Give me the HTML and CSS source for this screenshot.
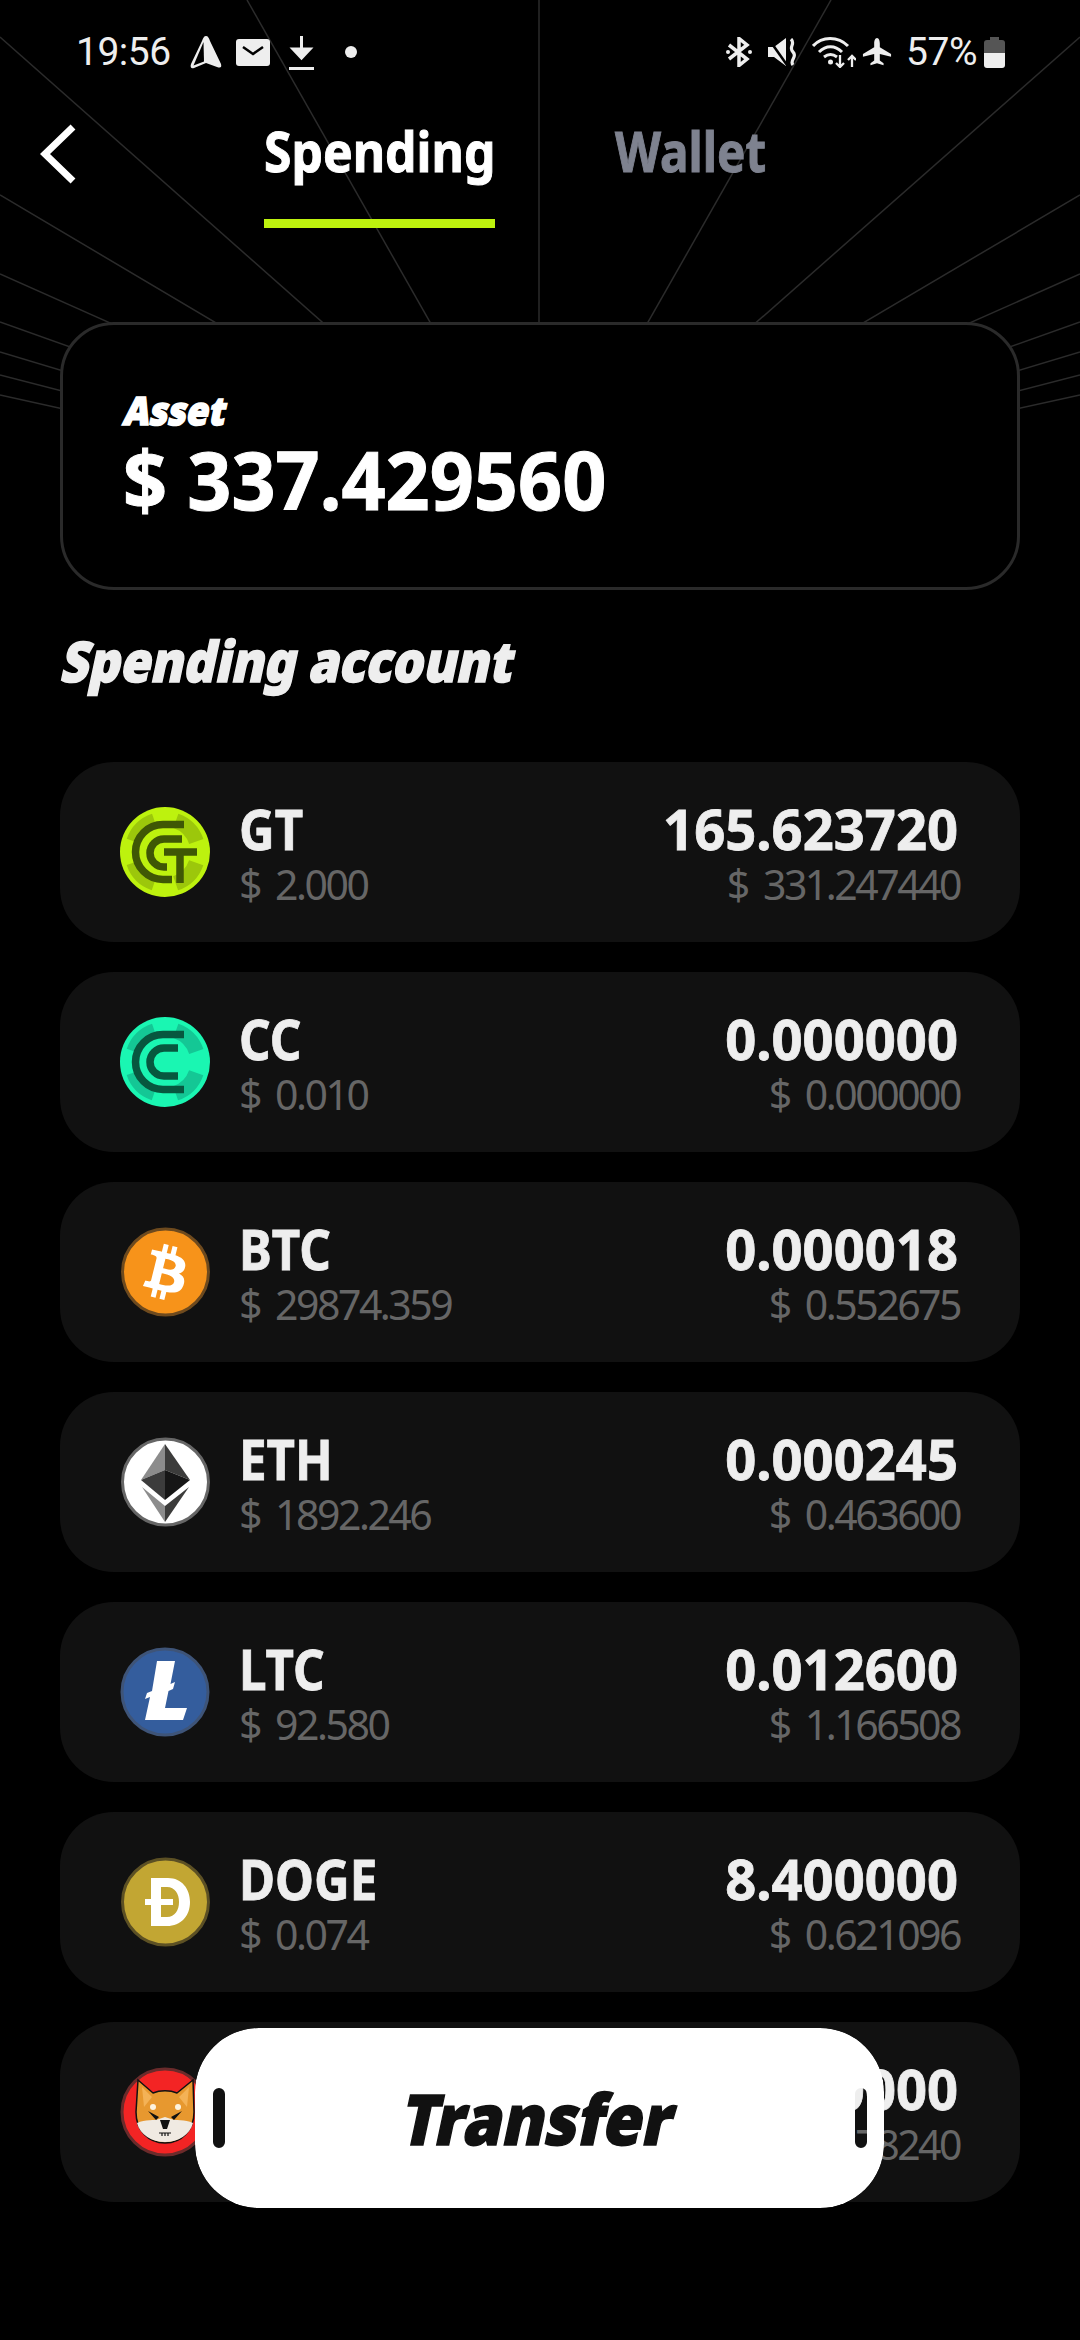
FILE: index.html
```html
<!DOCTYPE html>
<html lang="en">
<head>
  <meta charset="UTF-8" />
  <title>Spending</title>
  <link rel="stylesheet" href="styles.css">
</head>
<body>
  <div class="screen">
    <svg class="rays" width="1080" height="420" viewBox="0 0 1080 420">
      <g stroke="#2b2b2b" stroke-width="1.5">
        <line x1="539" y1="514" x2="539" y2="0" />
        <line x1="539" y1="514" x2="247" y2="0" />
        <line x1="539" y1="514" x2="831" y2="0" />
        <line x1="539" y1="514" x2="0" y2="37" />
        <line x1="539" y1="514" x2="1080" y2="37" />
        <line x1="539" y1="514" x2="0" y2="195" />
        <line x1="539" y1="514" x2="1080" y2="195" />
        <line x1="539" y1="514" x2="0" y2="274" />
        <line x1="539" y1="514" x2="1080" y2="274" />
        <line x1="539" y1="514" x2="0" y2="322" />
        <line x1="539" y1="514" x2="1080" y2="322" />
        <line x1="539" y1="514" x2="0" y2="352" />
        <line x1="539" y1="514" x2="1080" y2="352" />
        <line x1="539" y1="514" x2="0" y2="375" />
        <line x1="539" y1="514" x2="1080" y2="375" />
        <line x1="539" y1="514" x2="0" y2="395" />
        <line x1="539" y1="514" x2="1080" y2="395" />
      </g>
    </svg>

    <div class="statusbar">
      <div class="status-left">
        <span class="clock">19:56</span>
        <svg class="ic-nav" width="32" height="34" viewBox="0 0 32 34"><path d="M16 1C18 1 19 3 20 6L31 29C32 33 30 33 27 32L16 28 4 33C1 34 0 32 1 29L12 6C13 3 14 1 16 1Z" fill="#eee" /><path d="M13.500 7 3.500 30.500 14 26.500Z" fill="#000" /></svg>
        <svg class="ic-mail" width="34" height="27" viewBox="0 0 34 27"><rect width="34" height="27" rx="3" fill="#eee" /><path d="M7 8 17 15 27 8" fill="none" stroke="#000" stroke-width="2.500" /></svg>
        <svg class="ic-dl" width="25" height="35" viewBox="0 0 25 35"><path d="M12.500 1V20M4 14 12.500 23 21 14Z" fill="#eee" stroke="#eee" stroke-width="3" /><rect y="32" width="25" height="3" fill="#eee" /></svg>
        <span class="dot"></span>
      </div>
      <div class="status-right">
        <svg class="ic-bt" width="26" height="30" viewBox="0 0 26 30"><path d="M3 8 21 22 13 28.500V1.500L21 8 3 22" fill="none" stroke="#eee" stroke-width="3.500" /><circle cx="2" cy="15" r="2" fill="#eee" /><circle cx="24" cy="15" r="2" fill="#eee" /></svg>
        <svg class="ic-mute" width="29" height="28" viewBox="0 0 29 28"><path d="M0 9H6L18 0V28L6 19H0Z" fill="#eee" /><path d="M0 0 19 27" stroke="#000" stroke-width="2.500" /><path d="M23 1C28 6 20 9 25 14 30 19 21 22 25 27" fill="none" stroke="#eee" stroke-width="3.200" /></svg>
        <svg class="ic-wifi" width="44" height="32" viewBox="0 0 44 32"><g fill="none" stroke="#eee" stroke-width="3"><path d="M1 10C10 0 26 0 36 10" /><path d="M7 16C14 9 23 9 30 16" /><path d="M12 21C16 18 21 18 25 21" /></g><circle cx="18.500" cy="26" r="2.500" fill="#eee" /><path d="M28 19V31M24 27 28 31 32 27M40 31V20M36 24 40 20 44 24" fill="none" stroke="#eee" stroke-width="2.300" /></svg>
        <svg class="ic-plane" width="30" height="30" viewBox="0 0 32 30"><path d="M16 0C18 0 19 3 19 6V10L31 17V20L19 17V24L23 27V29L16 27 9 29V27L13 24V17L1 20V17L13 10V6C13 3 14 0 16 0Z" fill="#eee" /></svg>
        <span class="batt-text">57%</span>
        <span class="batt"><span class="batt-cap"></span><span class="batt-fill"></span></span>
      </div>
    </div>

    <header class="topnav">
      <svg class="back" width="36" height="60" viewBox="0 0 36 60"><path d="M33 3 5 30 33 57" fill="none" stroke="#fff" stroke-width="7" /></svg>
      <div class="tab tab-on"><span class="tab-label">Spending</span></div>
      <div class="tab"><span class="tab-label tab-label-off">Wallet</span></div>
    </header>

    <section class="asset-card">
      <div class="asset-label">Asset</div>
      <div class="asset-value">$ 337.429560</div>
    </section>

    <h2 class="section-title">Spending account</h2>

    <div class="coin-list">
      <div class="coin-row">
        <svg class="coin" viewBox="0 0 90 90">
          <circle cx="45" cy="45" r="45" fill="#bdf20e" />
          <circle cx="45" cy="45" r="33" fill="none" stroke="#9cc70b" stroke-width="15" stroke-dasharray="30 21.800" transform="rotate(19 45 45)" />
          <g fill="none" stroke="#3f5705" stroke-width="7.500">
            <path d="M64 17.500H43A27.500 27.500 0 0 0 43 72.500H52" />
            <path d="M62 32H44A14 14 0 0 0 44 60H47" />
            <path d="M44 45H77M60 45V76" />
          </g>
        </svg>
        <div class="coin-info"><div class="coin-name">GT</div><div class="coin-sub">$ 2.000</div></div>
        <div class="coin-vals"><div class="coin-amt">165.623720</div><div class="coin-sub">$ 331.247440</div></div>
      </div>
      <div class="coin-row">
        <svg class="coin" viewBox="0 0 90 90">
          <circle cx="45" cy="45" r="45" fill="#1af6b2" />
          <circle cx="45" cy="45" r="33" fill="none" stroke="#14c795" stroke-width="15" stroke-dasharray="30 21.800" transform="rotate(19 45 45)" />
          <g fill="none" stroke="#07573f" stroke-width="7.500">
            <path d="M64 17.500H43A27.500 27.500 0 0 0 43 72.500H64" />
            <path d="M58 31H44A14 14 0 0 0 44 59H58" />
          </g>
        </svg>
        <div class="coin-info"><div class="coin-name">CC</div><div class="coin-sub">$ 0.010</div></div>
        <div class="coin-vals"><div class="coin-amt">0.000000</div><div class="coin-sub">$ 0.000000</div></div>
      </div>
      <div class="coin-row">
        <svg class="coin" viewBox="0 0 90 90">
          <circle cx="45.500" cy="45" r="43" fill="#f7931a" stroke="#6e4a1e" stroke-width="3" />
          <g transform="scale(2.812)">
            <path fill="#fff" d="M23.189 14.020c.314-2.096-1.283-3.223-3.465-3.975l.708-2.840-1.728-.430-.690 2.765c-.454-.114-.920-.220-1.385-.326l.695-2.783L15.596 6l-.708 2.839c-.376-.086-.746-.170-1.104-.260l.002-.009-2.384-.595-.460 1.846s1.283.294 1.256.312c.700.175.826.638.805 1.006l-.806 3.235c.048.012.110.030.180.057l-.183-.045-1.130 4.532c-.086.212-.303.531-.793.410.018.025-1.256-.313-1.256-.313l-.858 1.978 2.250.561c.418.105.828.215 1.231.318l-.715 2.872 1.727.430.708-2.840c.472.127.930.245 1.378.357l-.706 2.828 1.728.430.715-2.866c2.948.558 5.164.333 6.097-2.333.752-2.146-.037-3.385-1.588-4.192 1.130-.260 1.980-1.003 2.207-2.538zm-3.950 5.538c-.533 2.147-4.148.986-5.320.695l.950-3.805c1.172.293 4.929.872 4.370 3.110zm.535-5.569c-.487 1.953-3.495.960-4.470.717l.860-3.450c.975.243 4.118.696 3.610 2.733z" />
          </g>
        </svg>
        <div class="coin-info"><div class="coin-name">BTC</div><div class="coin-sub">$ 29874.359</div></div>
        <div class="coin-vals"><div class="coin-amt">0.000018</div><div class="coin-sub">$ 0.552675</div></div>
      </div>
      <div class="coin-row">
        <svg class="coin" viewBox="0 0 90 90">
          <circle cx="45.500" cy="45" r="43" fill="#fff" stroke="#666" stroke-width="3" />
          <polygon points="45,7 21,43 45,33" fill="#8c8c8c" />
          <polygon points="45,7 70,43 45,33" fill="#3c3c3b" />
          <polygon points="21,43 45,33 45,63" fill="#3c3c3c" />
          <polygon points="70,43 45,33 45,63" fill="#161616" />
          <polygon points="22,50 45,69 45,85" fill="#8c8c8c" />
          <polygon points="69,50 45,69 45,85" fill="#3c3c3b" />
        </svg>
        <div class="coin-info"><div class="coin-name">ETH</div><div class="coin-sub">$ 1892.246</div></div>
        <div class="coin-vals"><div class="coin-amt">0.000245</div><div class="coin-sub">$ 0.463600</div></div>
      </div>
      <div class="coin-row">
        <svg class="coin" viewBox="0 0 90 90">
          <circle cx="45" cy="45" r="43" fill="#345d9d" stroke="#3e5478" stroke-width="3" />
          <path d="M37 14H55L50.500 37 55 35 53 42 48.500 44 45 61H67L63 73H25L30 50 25 52 27 46 32 44Z" fill="#fff" />
        </svg>
        <div class="coin-info"><div class="coin-name">LTC</div><div class="coin-sub">$ 92.580</div></div>
        <div class="coin-vals"><div class="coin-amt">0.012600</div><div class="coin-sub">$ 1.166508</div></div>
      </div>
      <div class="coin-row">
        <svg class="coin" viewBox="0 0 90 90">
          <circle cx="45.500" cy="45" r="43" fill="#c2a633" stroke="#5c5024" stroke-width="3" />
          <path fill-rule="evenodd" d="M31 21H48C62 21 70 32 70 45 70 59 61 69 47 69H31ZM41 30V60H47C55 60 59 53 59 45 59 37 55 30 47 30Z" fill="#fff" />
          <rect x="25" y="42" width="28" height="6" fill="#fff" />
        </svg>
        <div class="coin-info"><div class="coin-name">DOGE</div><div class="coin-sub">$ 0.074</div></div>
        <div class="coin-vals"><div class="coin-amt">8.400000</div><div class="coin-sub">$ 0.621096</div></div>
      </div>
      <div class="coin-row">
        <svg class="coin" viewBox="0 0 90 90">
          <circle cx="45" cy="45" r="43" fill="#f32424" stroke="#6b2b2b" stroke-width="3" />
          <path d="M18 13 33 26C40 23 50 23 57 26L73 13 74 45C74 63 62 76 45 76 28 76 16 63 16 45Z" fill="#e7982f" stroke="#111" stroke-width="1.500" />
          <path d="M22 20 32 30 24 40ZM69 20 59 30 67 40Z" fill="#f4b256" />
          <path d="M17 56C25 52 35 54 39 52L45 50 51 52C55 54 65 52 73 56 70 68 58 75 45 75 32 75 20 68 17 56Z" fill="#f0eae2" />
          <path d="M28 44 39 50 36 53ZM62 44 51 50 54 53Z" fill="#111" />
          <circle cx="33" cy="40" r="3" fill="#fdf3df" />
          <circle cx="58" cy="40" r="3" fill="#fdf3df" />
          <path d="M40 53H50L47 62H43Z" fill="#111" />
          <path d="M39 66H51M42 66V69M45 66V69M48 66V69" stroke="#111" stroke-width="1.200" fill="none" />
        </svg>
        <div class="coin-info"><div class="coin-name">SHIB</div><div class="coin-sub">$ 0.000</div></div>
        <div class="coin-vals"><div class="coin-amt">375360.000000</div><div class="coin-sub">$ 3.378240</div></div>
      </div>
    </div>

    <button class="transfer-btn">
      <span class="transfer-text">Transfer</span>
    </button>
  </div>
</body>
</html>
```

FILE: styles.css
```css
body {
  margin: 0;
  background: #000;
  font-family: "Noto Sans", "Open Sans", sans-serif;
  color: #fff;
}

.screen {
  position: relative;
  width: 1080px;
  height: 2340px;
  overflow: hidden;
  background: #000;
}

.rays {
  position: absolute;
  left: 0;
  top: 0;
}

.statusbar {
  position: relative;
  display: flex;
  justify-content: space-between;
  align-items: center;
  height: 34px;
  padding: 35px 75px 0 76px;
}

.status-left, .status-right {
  display: flex;
  align-items: center;
}

.clock, .batt-text {
  font-family: Roboto, sans-serif;
  font-size: 39px;
  font-weight: 400;
  letter-spacing: -0.5px;
  color: #eee;
  line-height: 34px;
}

.ic-nav { margin-left: 19px; }
.ic-mail { margin-left: 14px; }
.ic-dl { margin-left: 19px; }

.dot {
  width: 12px;
  height: 12px;
  margin-left: 31px;
  border-radius: 50%;
  background: #eee;
}

.ic-mute { margin-left: 16px; }
.ic-wifi { margin-left: 15px; }
.ic-plane { margin-left: 6px; }
.batt-text { margin-left: 14px; }

.batt {
  display: flex;
  flex-direction: column;
  align-items: center;
  width: 21px;
  height: 31px;
  margin-left: 7px;
}

.batt-cap {
  width: 9px;
  height: 3px;
  background: #555;
}

.batt-fill {
  width: 21px;
  height: 28px;
  border-radius: 3px;
  background: linear-gradient(#555 46%, #eee 46%);
}

.topnav {
  position: relative;
  display: flex;
  height: 253px;
}

.back {
  margin: 55px 0 0 40px;
}

.tab {
  box-sizing: border-box;
  height: 159px;
  padding-top: 43px;
  font-size: 56px;
  font-weight: 700;
  color: #7e828f;
  line-height: 76px;
  white-space: nowrap;
}

.tab-on {
  width: 231px;
  margin-left: 188px;
  margin-right: 120px;
  color: #fff;
  border-bottom: 9px solid #bdf20e;
}

.tab-label {
  display: inline-block;
  -webkit-text-stroke: 1px currentColor;
  transform: scaleX(0.89);
  transform-origin: left;
}

.tab-label-off {
  transform: scaleX(0.85);
}

.asset-card {
  position: relative;
  box-sizing: border-box;
  width: 960px;
  height: 268px;
  margin-left: 60px;
  padding: 61px 60px 0;
  background: #000;
  border: 3px solid #2a2a2a;
  border-radius: 54px;
}

.asset-label, .section-title, .transfer-text {
  display: block;
  width: max-content;
  font-weight: 900;
  -webkit-text-stroke: 1.5px currentColor;
  transform-origin: left bottom;
}

.asset-label {
  margin-left: -3px;
  font-size: 39px;
  line-height: 48px;
  transform: skewX(-12deg) scaleX(0.92);
}

.asset-value {
  font-size: 80px;
  font-weight: 700;
  line-height: 90px;
  white-space: nowrap;
  -webkit-text-stroke: 1px currentColor;
  transform: scaleX(0.965);
  transform-origin: left;
}

.section-title {
  margin: 34px 0 0 56px;
  font-size: 56px;
  line-height: 72px;
  color: #eee;
  transform: skewX(-12deg) scaleX(0.878);
}

.coin-list {
  display: flex;
  flex-direction: column;
  gap: 30px;
  margin: 66px 60px 0;
}

.coin-row {
  display: flex;
  align-items: center;
  height: 180px;
  padding: 5px 60px 0 60px;
  box-sizing: border-box;
  background: #111;
  border-radius: 54px;
}

.coin {
  flex: none;
  width: 90px;
  height: 90px;
  margin-top: -5px;
}

.coin-info {
  margin-left: 29px;
  flex: 1;
}

.coin-vals {
  text-align: right;
}

.coin-name, .coin-amt {
  font-size: 56px;
  font-weight: 700;
  line-height: 58px;
  color: #eee;
  -webkit-text-stroke: 0.8px currentColor;
}

.coin-name {
  transform: scaleX(0.88);
  transform-origin: left;
}

.coin-amt {
  margin-right: 2px;
  transform: scaleX(0.97);
  transform-origin: right;
}

.coin-sub {
  font-size: 41px;
  letter-spacing: -2.5px;
  word-spacing: 7px;
  line-height: 54px;
  color: #666;
}

.transfer-btn {
  position: absolute;
  left: 195px;
  top: 2028px;
  display: flex;
  justify-content: center;
  align-items: center;
  box-sizing: border-box;
  width: 689px;
  height: 180px;
  padding: 0;
  border: none;
  border-radius: 64px;
  background: #fff;
  font-family: inherit;
  -webkit-mask: url("data:image/svg+xml,%3Csvg xmlns='http://www.w3.org/2000/svg' width='689' height='180'%3E%3Cpath fill-rule='evenodd' d='M0 0H689V180H0ZM18 66a6 6 0 0 1 12 0v48a6 6 0 0 1-12 0ZM660 66a6 6 0 0 1 12 0v48a6 6 0 0 1-12 0Z'/%3E%3C/svg%3E");
  mask: url("data:image/svg+xml,%3Csvg xmlns='http://www.w3.org/2000/svg' width='689' height='180'%3E%3Cpath fill-rule='evenodd' d='M0 0H689V180H0ZM18 66a6 6 0 0 1 12 0v48a6 6 0 0 1-12 0ZM660 66a6 6 0 0 1 12 0v48a6 6 0 0 1-12 0Z'/%3E%3C/svg%3E");
}

.transfer-text {
  font-size: 70px;
  color: #111;
  transform: skewX(-12deg) scaleX(0.9);
  transform-origin: center;
}
```
